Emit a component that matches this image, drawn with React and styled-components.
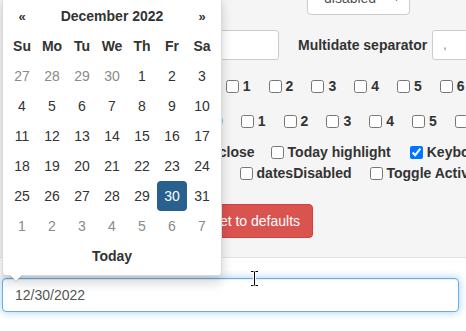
import React from "react";
import styled, { createGlobalStyle } from "styled-components";

const GlobalStyle = createGlobalStyle`
  html, body {
    margin: 0;
    padding: 0;
    background: #ffffff;
    overflow: hidden;
  }
  body {
    font-family: "Liberation Sans", Arial, sans-serif;
    font-size: 14px;
    color: #333333;
  }
`;

const Page = styled.div`
  position: relative;
  width: 466px;
  height: 331px;
  overflow: hidden;
`;

const Well = styled.div`
  display: flex;
  flex-direction: column;
  margin-top: -19px;
  padding-bottom: 19px;
  background-color: #f5f5f5;
  border-bottom: 1px solid #e3e3e3;
`;

const Row = styled.div`
  display: flex;
  align-items: center;
  height: ${(props) => props.$h || 20}px;
  margin-top: ${(props) => props.$mt || 0}px;
  padding-left: ${(props) => props.$indent || 0}px;
  gap: ${(props) => (props.$gap === undefined ? 18 : props.$gap)}px;
  white-space: nowrap;

  & > * {
    flex-shrink: 0;
  }
`;

const FakeSelect = styled.div`
  display: flex;
  align-items: center;
  justify-content: space-between;
  box-sizing: border-box;
  width: 103px;
  height: 34px;
  padding: 0 8px 0 16px;
  border: 1px solid #cccccc;
  border-radius: 4px;
  background-color: #ffffff;
  color: #555555;
`;

const Caret = styled.span`
  font-size: 9px;
  color: #333333;
`;

const TextInput = styled.input`
  box-sizing: border-box;
  width: ${(props) => props.$w}px;
  height: 30px;
  padding: 5px 10px;
  border: 1px solid #cccccc;
  border-radius: 3px;
  background-color: #ffffff;
  font-family: "Liberation Sans", Arial, sans-serif;
  font-size: 12px;
  color: #777777;
  outline: none;
`;

const FieldLabel = styled.label`
  font-weight: bold;
  margin-left: 1px;
  margin-right: -13px;
`;

const CheckItem = styled.label`
  display: flex;
  align-items: center;
  gap: 4px;
  font-weight: bold;
  margin-right: ${(props) => props.$mr || 0}px;

  input {
    width: 13px;
    height: 13px;
    margin: 0;
  }
`;

const ResetButton = styled.button`
  height: 34px;
  padding: 6px 12px;
  border: 1px solid #d43f3a;
  border-radius: 4px;
  background-color: #d9534f;
  color: #ffffff;
  font-family: "Liberation Sans", Arial, sans-serif;
  font-size: 14px;
`;

const DateInput = styled.input`
  display: block;
  box-sizing: border-box;
  width: 457px;
  height: 34px;
  margin: 20px 0 0 2px;
  padding: 6px 12px;
  border: 1px solid #66afe9;
  border-radius: 4px;
  background-color: #ffffff;
  box-shadow: inset 0 1px 1px rgba(0, 0, 0, 0.075), 0 0 8px rgba(102, 175, 233, 0.6);
  font-family: "Liberation Sans", Arial, sans-serif;
  font-size: 14px;
  color: #555555;
  outline: none;
`;

const Picker = styled.div`
  position: absolute;
  left: 2px;
  top: -4px;
  padding: 4px;
  background-color: #ffffff;
  border: 1px solid rgba(0, 0, 0, 0.15);
  border-radius: 4px;
  box-shadow: 0 6px 12px rgba(0, 0, 0, 0.175);

  &::before,
  &::after {
    content: "";
    position: absolute;
    border-left: 7px solid transparent;
    border-right: 7px solid transparent;
  }
  &::before {
    bottom: -7px;
    left: 6px;
    border-top: 7px solid rgba(0, 0, 0, 0.15);
  }
  &::after {
    bottom: -6px;
    left: 7px;
    border-left-width: 6px;
    border-right-width: 6px;
    border-top: 6px solid #ffffff;
  }
`;

const Table = styled.table`
  border-collapse: separate;
  border-spacing: 0;
`;

const HeadCell = styled.th`
  width: 30px;
  height: 30px;
  padding: 0;
  text-align: center;
  font-weight: bold;
  font-size: ${(props) => (props.$arrow ? "13px" : "14px")};
  color: #333333;
`;

const DayCell = styled.td`
  width: 30px;
  height: 30px;
  padding: 0;
  text-align: center;
  border-radius: 4px;
  color: ${(props) => (props.$active ? "#ffffff" : props.$muted ? "#8a8a8a" : "#333333")};
  background-color: ${(props) => (props.$active ? "#28608f" : "transparent")};
`;

const CursorMark = styled.svg`
  position: absolute;
  left: 250px;
  top: 270px;
`;

const weeks = [
  [27, 28, 29, 30, 1, 2, 3],
  [4, 5, 6, 7, 8, 9, 10],
  [11, 12, 13, 14, 15, 16, 17],
  [18, 19, 20, 21, 22, 23, 24],
  [25, 26, 27, 28, 29, 30, 31],
  [1, 2, 3, 4, 5, 6, 7],
];

const dayNames = ["Su", "Mo", "Tu", "We", "Th", "Fr", "Sa"];

function DatePicker() {
  return (
    <Picker>
      <Table>
        <thead>
          <tr>
            <HeadCell $arrow>«</HeadCell>
            <HeadCell colSpan={5}>December 2022</HeadCell>
            <HeadCell $arrow>»</HeadCell>
          </tr>
          <tr>
            {dayNames.map((d) => (
              <HeadCell key={d}>{d}</HeadCell>
            ))}
          </tr>
        </thead>
        <tbody>
          {weeks.map((week, wi) => (
            <tr key={wi}>
              {week.map((day, di) => {
                const muted = (wi === 0 && day > 20) || wi === 5;
                const active = wi === 4 && day === 30;
                return (
                  <DayCell key={di} $muted={muted} $active={active}>
                    {day}
                  </DayCell>
                );
              })}
            </tr>
          ))}
        </tbody>
        <tfoot>
          <tr>
            <HeadCell colSpan={7}>Today</HeadCell>
          </tr>
        </tfoot>
      </Table>
    </Picker>
  );
}

function DayChecks() {
  return [0, 1, 2, 3, 4, 5, 6].map((n) => (
    <CheckItem key={n}>
      <input type="checkbox" />
      {n}
    </CheckItem>
  ));
}

function App() {
  return (
    <Page>
      <GlobalStyle />
      <Well>
        <Row $h={34} $indent={307}>
          <FakeSelect>
            disabled <Caret>▼</Caret>
          </FakeSelect>
        </Row>
        <Row $h={30} $mt={15} $indent={139} $gap={18}>
          <TextInput $w={140} defaultValue="" />
          <FieldLabel>Multidate separator</FieldLabel>
          <TextInput $w={80} defaultValue="," />
        </Row>
        <Row $mt={16} $indent={183}>
          <DayChecks />
        </Row>
        <Row $mt={15} $indent={198}>
          <DayChecks />
        </Row>
        <Row $mt={11} $indent={166} $gap={19}>
          <CheckItem $mr={-3}>
            <input type="checkbox" />
            Auto close
          </CheckItem>
          <CheckItem>
            <input type="checkbox" />
            Today highlight
          </CheckItem>
          <CheckItem>
            <input type="checkbox" defaultChecked />
            Keyboard navigation
          </CheckItem>
        </Row>
        <Row $mt={1} $indent={134} $gap={18}>
          <CheckItem>
            <input type="checkbox" />
            Week start
          </CheckItem>
          <CheckItem>
            <input type="checkbox" />
            datesDisabled
          </CheckItem>
          <CheckItem>
            <input type="checkbox" />
            Toggle Active
          </CheckItem>
        </Row>
        <Row $h={34} $mt={21} $indent={182}>
          <ResetButton>Reset to defaults</ResetButton>
        </Row>
      </Well>
      <DateInput defaultValue="12/30/2022" />
      <DatePicker />
      <CursorMark width="9" height="17" viewBox="0 0 9 17">
        <path
          d="M1 1.5h2.5M5.5 1.5H8M4.5 1.5v14M1 15.5h2.5M5.5 15.5H8"
          stroke="#ffffff"
          strokeWidth="3"
          fill="none"
        />
        <path
          d="M1 1.5h2.5M5.5 1.5H8M4.5 1.5v14M1 15.5h2.5M5.5 15.5H8"
          stroke="#000000"
          strokeWidth="1"
          fill="none"
        />
      </CursorMark>
    </Page>
  );
}

export default App;
